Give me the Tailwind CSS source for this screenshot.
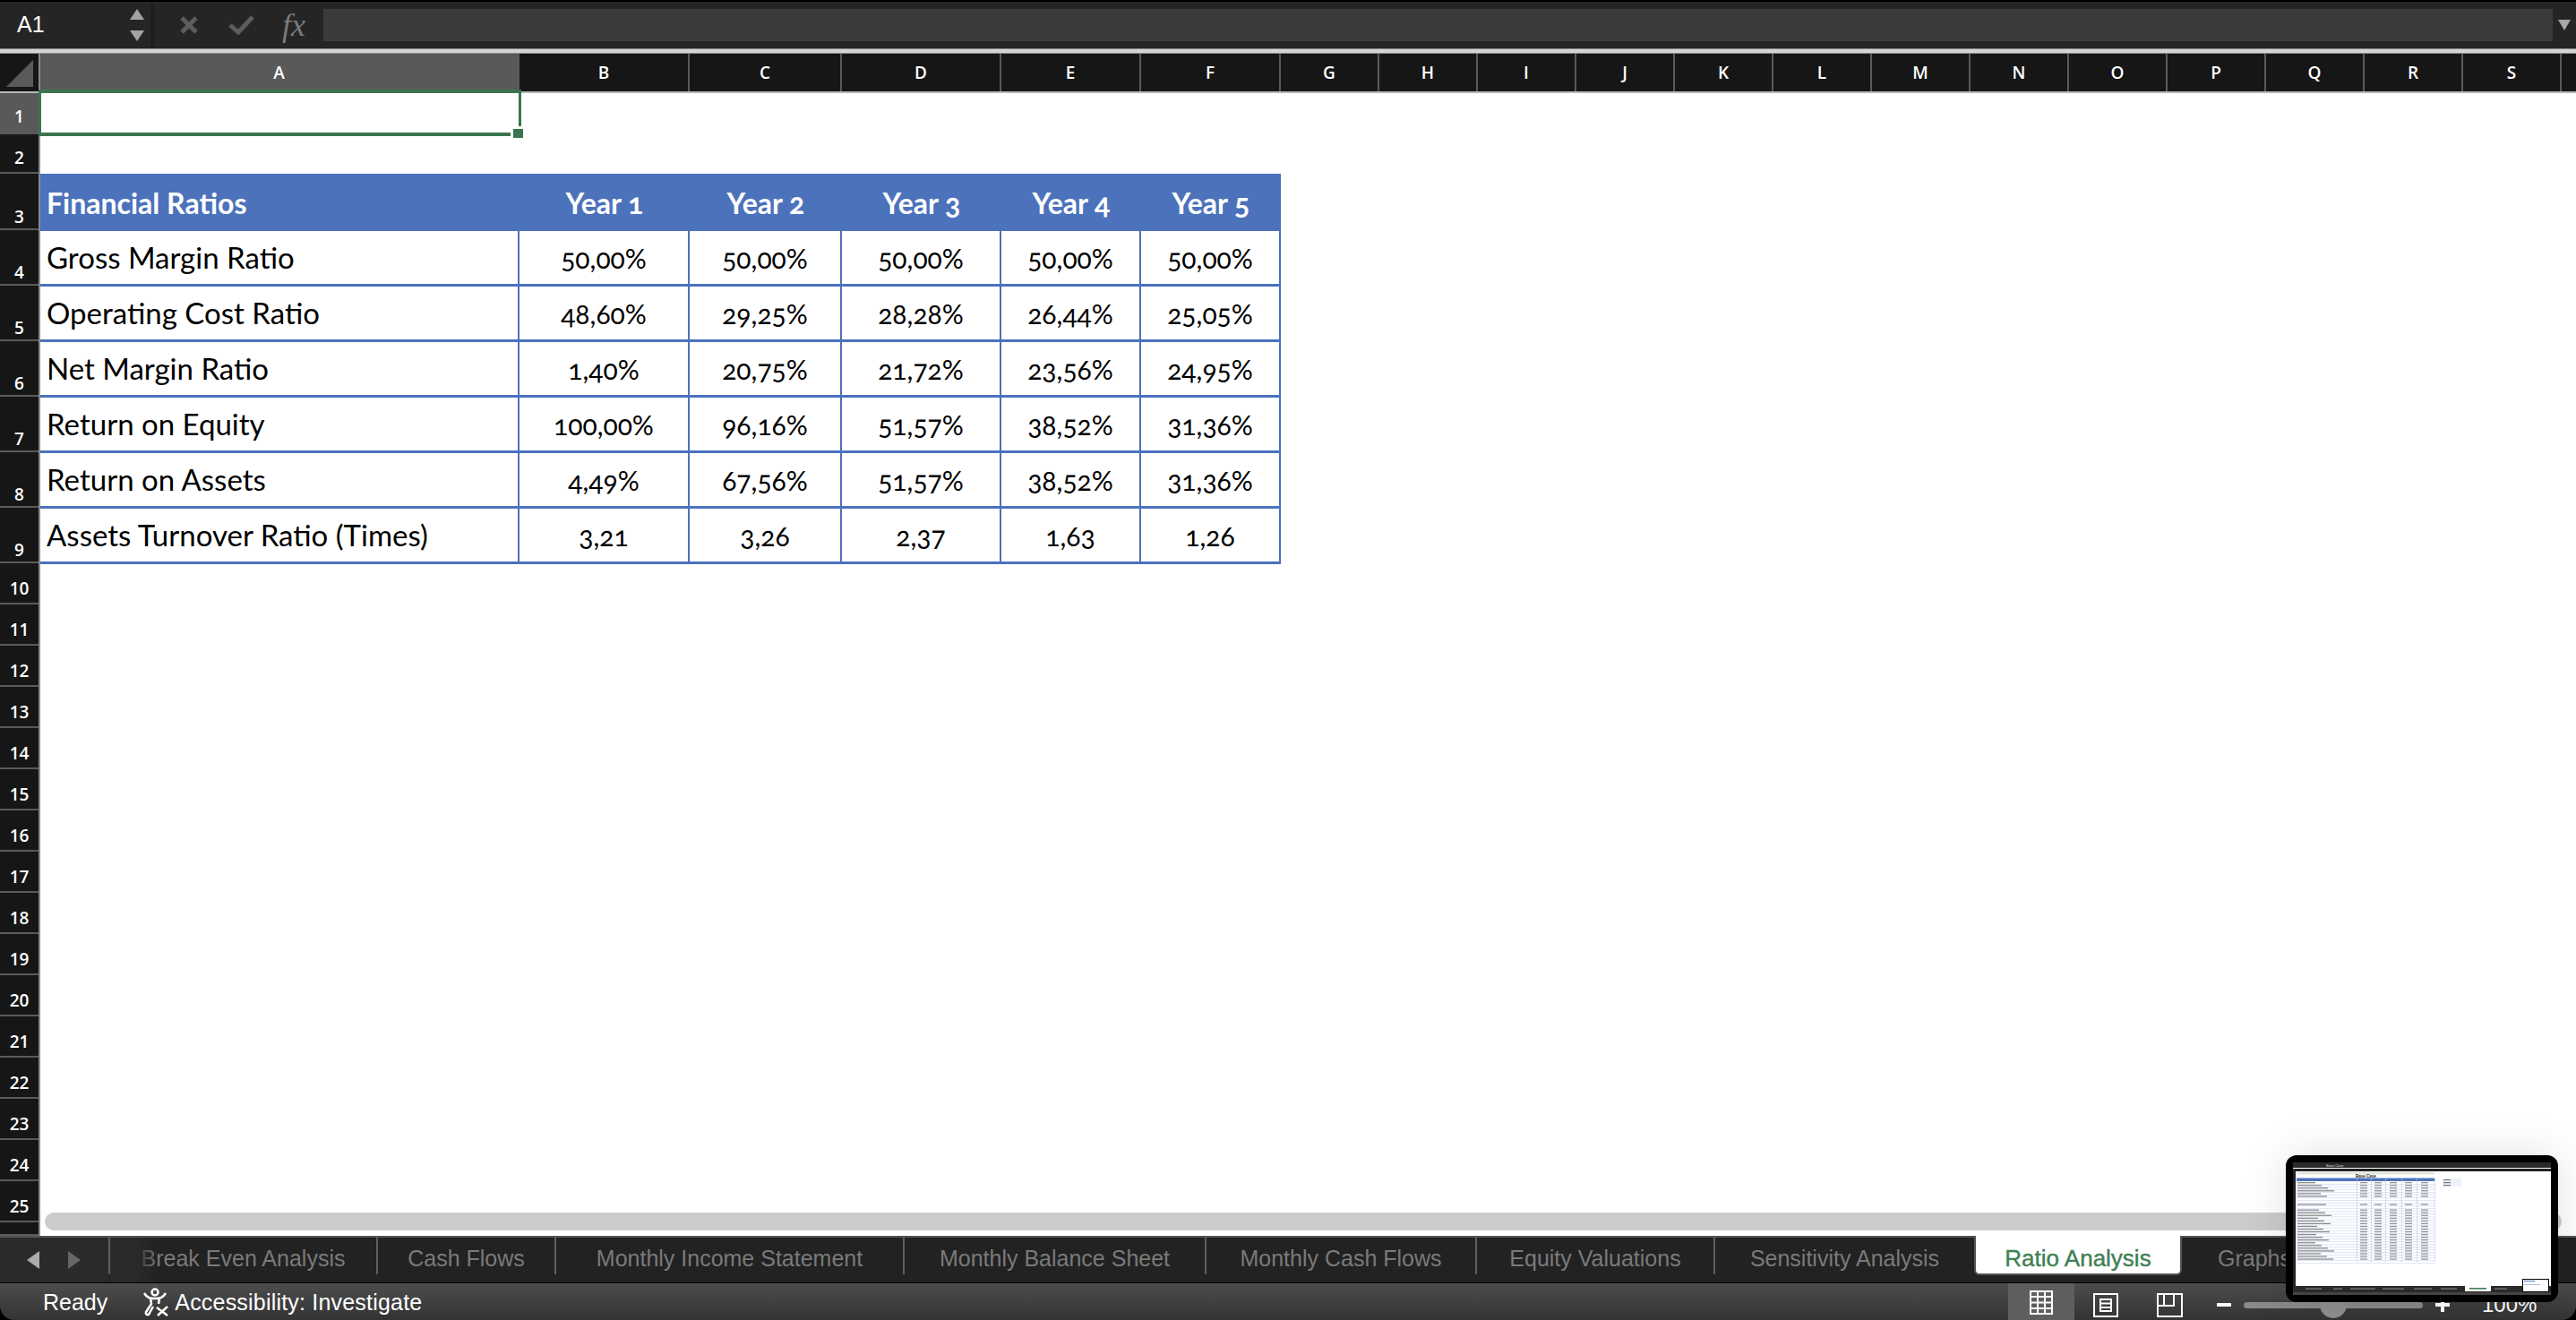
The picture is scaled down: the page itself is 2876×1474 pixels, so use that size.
<!DOCTYPE html>
<html lang="en">
<head>
  <meta charset="UTF-8" />
  <title>Ratio Analysis</title>
  <script src="https://cdn.jsdelivr.net/npm/@tailwindcss/browser@4"></script>
</head>
<body class="bg-black">
  <div class="relative w-[2876px] h-[1474px] overflow-hidden flex flex-col pt-[2px] bg-black font-['Liberation_Sans',sans-serif]">

    <!-- Formula bar -->
    <div class="h-[52px] flex items-stretch bg-[#252525]">
      <div class="w-[168px] flex items-center justify-between pl-[19px] pr-[6px] text-[25px] text-white">
        <span>A1</span>
        <svg width="18" height="36" viewBox="0 0 18 36"><path d="M9 0 L17 12 L1 12 Z M1 24 L17 24 L9 36 Z" fill="#a3a3a3"/></svg>
      </div>
      <div class="w-[4px] bg-[#1d1d1d]"></div>
      <div class="w-[189px] flex items-center relative">
        <svg class="ml-[28px]" width="22" height="22" viewBox="0 0 22 22"><path d="M3 3 L19 19 M19 3 L3 19" stroke="#5c5c5c" stroke-width="5"/></svg>
        <svg class="ml-[33px]" width="30" height="22" viewBox="0 0 30 22"><path d="M2 11 L11 19 L27 2" fill="none" stroke="#5c5c5c" stroke-width="5"/></svg>
        <span class="ml-[30px] font-['Liberation_Serif',serif] italic text-[36px] leading-none text-[#7b7b7b]">fx</span>
      </div>
      <div class="w-[2489px] my-[8px] bg-[#3b3b3b]"></div>
      <div class="flex-1 flex items-center justify-center">
        <svg width="14" height="12" viewBox="0 0 14 12"><path d="M0 0 L14 0 L7 12 Z" fill="#a8a8a8"/></svg>
      </div>
    </div>
    <div class="h-[6px] bg-[#d4d4d4] border-y border-[#8a8a8a]"></div>

    <!-- Column headers -->
    <div class="h-[44px] flex border-b-2 border-[#b8b8b8] bg-[#161616] text-white text-[19px] font-semibold font-['Open_Sans',sans-serif]">
      <div class="w-[45px] shrink-0 flex items-end justify-center pb-[4px] border-r-2 border-[#8a8a8a]">
        <svg width="32" height="32" viewBox="0 0 32 32"><path d="M31 1 L31 31 L1 31 Z" fill="#5a5a5a"/></svg>
      </div>
      <div id="colHeaders" class="flex"></div>
    </div>

    <!-- Sheet -->
    <div class="h-[1276px] flex">
      <div id="rowHeaders" class="w-[45px] shrink-0 bg-[#161616] border-r-2 border-[#8a8a8a] text-white text-[19px] font-semibold font-['Open_Sans',sans-serif]"></div>
      <div class="flex-1 bg-white">
        <div class="w-[1386px] mt-[90px] grid grid-cols-[535px_190px_170px_178px_156px_156px] text-[30px] leading-none text-black oldstyle-nums font-['Lato',sans-serif]">
          <div class="h-[64px] pt-[2px] bg-[#4c72bc] text-white text-[32px] font-bold flex items-center pl-[7px]">Financial Ratios</div>
          <div class="h-[64px] pt-[2px] bg-[#4c72bc] text-white text-[32px] font-bold flex items-center justify-center">Year 1</div>
          <div class="h-[64px] pt-[2px] bg-[#4c72bc] text-white text-[32px] font-bold flex items-center justify-center">Year 2</div>
          <div class="h-[64px] pt-[2px] bg-[#4c72bc] text-white text-[32px] font-bold flex items-center justify-center">Year 3</div>
          <div class="h-[64px] pt-[2px] bg-[#4c72bc] text-white text-[32px] font-bold flex items-center justify-center">Year 4</div>
          <div class="h-[64px] pt-[2px] bg-[#4c72bc] text-white text-[32px] font-bold flex items-center justify-center">Year 5</div>
          <div id="tableBody" class="contents"></div>
        </div>
      </div>
    </div>

    <!-- Selected cell -->
    <div class="absolute left-[43px] top-[100px] w-[539px] h-[52px] border-x-[3px] border-y-4 border-[#3a7550]"></div>
    <div class="absolute left-[570px] top-[141px] w-[15px] h-[14px] bg-white"></div>
    <div class="absolute left-[573px] top-[144px] w-[11px] h-[10px] bg-[#3a7550]"></div>

    <!-- Horizontal scrollbar -->
    <div class="absolute left-[50px] top-[1354px] w-[2810px] h-[20px] rounded-full bg-[#cccccc]"></div>

    <!-- Sheet tabs -->
    <div class="h-[53px] flex bg-[#222222] border-t-2 border-[#555555] border-b border-b-black text-[25px] text-[#7a7a7a] relative">
      <div class="w-[121px] flex items-center pl-[30px] gap-[32px] bg-[#2a2a2a]">
        <svg width="14" height="20" viewBox="0 0 14 20"><path d="M14 0 L14 20 L0 10 Z" fill="#ababab"/></svg>
        <svg width="14" height="20" viewBox="0 0 14 20"><path d="M0 0 L0 20 L14 10 Z" fill="#666666"/></svg>
      </div>
      <div class="w-[301px] h-[41px] pt-[7px] flex items-center justify-center border-l-2 border-r-2 border-[#5f5f5f] relative">Break Even Analysis
        <div class="absolute left-0 top-0 w-[54px] h-[50px] bg-gradient-to-r from-[#2a2a2a] via-[#2a2a2a] to-transparent"></div>
      </div>
      <div class="w-[199px] h-[41px] pt-[7px] flex items-center justify-center border-r-2 border-[#5f5f5f]">Cash Flows</div>
      <div class="w-[389px] h-[41px] pt-[7px] flex items-center justify-center border-r-2 border-[#5f5f5f]">Monthly Income Statement</div>
      <div class="w-[337px] h-[41px] pt-[7px] flex items-center justify-center border-r-2 border-[#5f5f5f]">Monthly Balance Sheet</div>
      <div class="w-[302px] h-[41px] pt-[7px] flex items-center justify-center border-r-2 border-[#5f5f5f]">Monthly Cash Flows</div>
      <div class="w-[266px] h-[41px] pt-[7px] flex items-center justify-center border-r-2 border-[#5f5f5f]">Equity Valuations</div>
      <div class="w-[289px] h-[41px] pt-[7px] flex items-center justify-center">Sensitivity Analysis</div>
      <div class="w-[232px] h-[44px] -mt-[2px] pt-[9px] flex items-center justify-center bg-white border-x-2 border-b-2 border-[#555555] rounded-b-[6px] text-[26px] text-[#3f8053] [-webkit-text-stroke:0.4px_#3f8053]">Ratio Analysis</div>
      <div class="pl-[40px] h-[41px] pt-[7px] flex items-center">Graphs</div>
    </div>

    <!-- Status bar -->
    <div class="h-[41px] flex items-center rounded-b-[16px] bg-gradient-to-b from-[#4d4d4d] to-[#333333] text-[25px] text-white">
      <span class="ml-[48px] pt-[2px]">Ready</span>
      <svg class="ml-[39px]" width="31" height="32" viewBox="0 0 31 32" fill="none" stroke="#ffffff" stroke-width="2.500"><circle cx="14" cy="5" r="3.5"/><path d="M2 6 C5 11 8 12 14 12 C20 12 23 11 26 6 M9 12 L10 18 L4 27 C3 31 7 31 8 28 L12 21 M19 12 L18 18 M16 22 L28 31 M28 21 L17 31"/></svg>
      <span class="ml-[5px] pt-[2px] tracking-[0.2px]">Accessibility: Investigate</span>
      <div class="ml-auto w-[74px] h-[41px] mr-[560px] pt-[2px] bg-[#5e5e5e] flex items-center justify-center">
        <svg width="26" height="27" viewBox="0 0 26 27" fill="none" stroke="#ffffff" stroke-width="2"><path d="M1 1 H25 V26 H1 Z M9 1 V26 M17 1 V26 M1 7 H25 M1 13.500 H25 M1 20 H25"/></svg>
      </div>
    </div>

    <!-- Status bar controls on the right -->
    <div class="absolute left-[2337px] top-[1439px] flex items-center">
      <svg width="28" height="27" viewBox="0 0 28 27" fill="none" stroke="#ffffff" stroke-width="2"><path d="M1 1 H27 V26 H1 Z M8 7 H20 V20 H8 Z M8 11.500 H20 M8 16 H20"/></svg>
      <svg class="ml-[43px]" width="29" height="27" viewBox="0 0 29 27" fill="none" stroke="#ffffff" stroke-width="2"><path d="M1 1 H28 V26 H1 Z M8 1 V14 H1 M8 14 H19 V1"/></svg>
      <div class="ml-[38px] w-[16px] h-[4px] bg-white"></div>
      <div class="ml-[14px] w-[200px] h-[7px] rounded-full bg-[#8a8a8a] relative">
        <div class="absolute left-[85px] -top-[12px] w-[30px] h-[30px] rounded-full bg-[#8f8f8f]"></div>
      </div>
      <div class="ml-[14px] relative w-[16px] h-[16px]">
        <div class="absolute left-0 top-[6px] w-[16px] h-[4px] bg-white"></div>
        <div class="absolute left-[6px] top-0 w-[4px] h-[16px] bg-white"></div>
      </div>
      <span class="ml-[36px] text-[24px] text-white">100%</span>
    </div>

    <!-- Window thumbnail -->
    <div class="absolute left-[2552px] top-[1290px] w-[304px] h-[164px] p-[8px] rounded-[12px] bg-black shadow-[0_0_50px_rgba(0,0,0,0.12)]">
      <svg id="thumb" width="288" height="148" viewBox="0 0 288 148" class="block bg-white"></svg>
    </div>
  </div>

  <script>
    const columns = [["A",535,"bg-[#595959]"],["B",190,""],["C",170,""],["D",178,""],["E",156,""],["F",156,""]];
    "GHIJKLMNOPQRS".split("").forEach(c => columns.push([c,110,""]));
    document.getElementById("colHeaders").innerHTML = columns.map(([name, w, bg]) =>
      `<div class="${bg} border-r-2 border-[#5a5a5a] flex items-center justify-center" style="width:${w}px">${name}</div>`).join("");

    const rowHeights = [46,44,63,62,62,62,62,62,62];
    for (let i = 0; i < 16; i++) rowHeights.push(46);
    rowHeights.push(15);
    document.getElementById("rowHeaders").innerHTML = rowHeights.map((h, i) => {
      const pad = h > 60 ? "pb-[1px]" : i === 0 ? "pb-[6px]" : "pb-[4px]";
      const active = i === 0 ? "bg-[#595959]" : "";
      const label = i < 25 ? i + 1 : "";
      return `<div class="${pad} ${active} border-b-2 border-[#5a5a5a] flex items-end justify-center leading-[24px]" style="height:${h}px">${label}</div>`;
    }).join("");

    const rows = [
      ["Gross Margin Ratio","50,00%","50,00%","50,00%","50,00%","50,00%"],
      ["Operating Cost Ratio","48,60%","29,25%","28,28%","26,44%","25,05%"],
      ["Net Margin Ratio","1,40%","20,75%","21,72%","23,56%","24,95%"],
      ["Return on Equity","100,00%","96,16%","51,57%","38,52%","31,36%"],
      ["Return on Assets","4,49%","67,56%","51,57%","38,52%","31,36%"],
      ["Assets Turnover Ratio (Times)","3,21","3,26","2,37","1,63","1,26"],
    ];
    document.getElementById("tableBody").innerHTML = rows.map(row => row.map((text, i) => i === 0
      ? `<div class="h-[62px] text-[33px] flex items-center pl-[7px] border-r-2 border-b-[3px] border-[#4a72bd]">${text}</div>`
      : `<div class="h-[62px] flex items-center justify-center border-r-2 border-b-[3px] border-[#4a72bd]">${text}</div>`).join("")).join("");

    // tiny copy of another sheet inside the thumbnail
    function rect(x, y, w, h, fill) { return `<rect x="${x}" y="${y}" width="${w}" height="${h}" fill="${fill}"/>`; }
    let t = rect(0,0,288,6,"#2a2a2a") + rect(0,7,288,3,"#222222") + rect(0,10,3,128,"#222222");
    t += `<text x="37" y="5" font-size="4" fill="#dddddd" font-family="Liberation Sans">Base Case</text>`;
    t += rect(4,11,154,2.5,"#dfe8d8") + rect(4,17.5,154,3.5,"#4c72bc");
    t += `<text x="70" y="17" font-size="4.500" font-weight="bold" fill="#222222" font-family="Liberation Sans">Base Case</text>`;
    const vx = [71,87,103,121,138,158];
    for (let i = 0; i < 30; i++) {
      const y = 21 + i * 3.05;
      t += rect(4, y + 3, 154, 0.6, "#c9d6f0");
      if (![6,7,9,29].includes(i)) {
        t += rect(5, y + 1, 20 + (i * 7) % 22, 1.3, "#8c8c8c");
        [75,91,108,125,143].forEach(x => { t += rect(x, y + 1, 8, 1.3, "#969696"); });
      }
    }
    vx.forEach(x => { t += rect(x, 17.5, 0.6, 94, "#b9c8ea"); });
    t += rect(167,17.5,21,9.500,"#eef2fb") + rect(168,19,8,1.2,"#777777") + rect(168,22,8,1.2,"#777777") + rect(168,25,8,1.2,"#777777");
    t += rect(0,138,288,7,"#2a2a2a") + rect(0,145,288,3,"#444444");
    [14,45,64,100,135,165].forEach((x, i) => { t += rect(x, 140.500, [18,10,28,24,20,18][i], 1.4, "#777777"); });
    t += rect(192,138,29,6,"#ffffff") + rect(197,140,19,1.6,"#3c7d4f") + rect(225,140.500,14,1.4,"#777777");
    t += rect(256,130,30,15,"#000000") + rect(257,131,28,13,"#ffffff") + rect(258,132,12,1,"#4c72bc") + rect(258,136,18,0.8,"#9fb3de");
    document.getElementById("thumb").innerHTML = t;
  </script>
</body>
</html>
